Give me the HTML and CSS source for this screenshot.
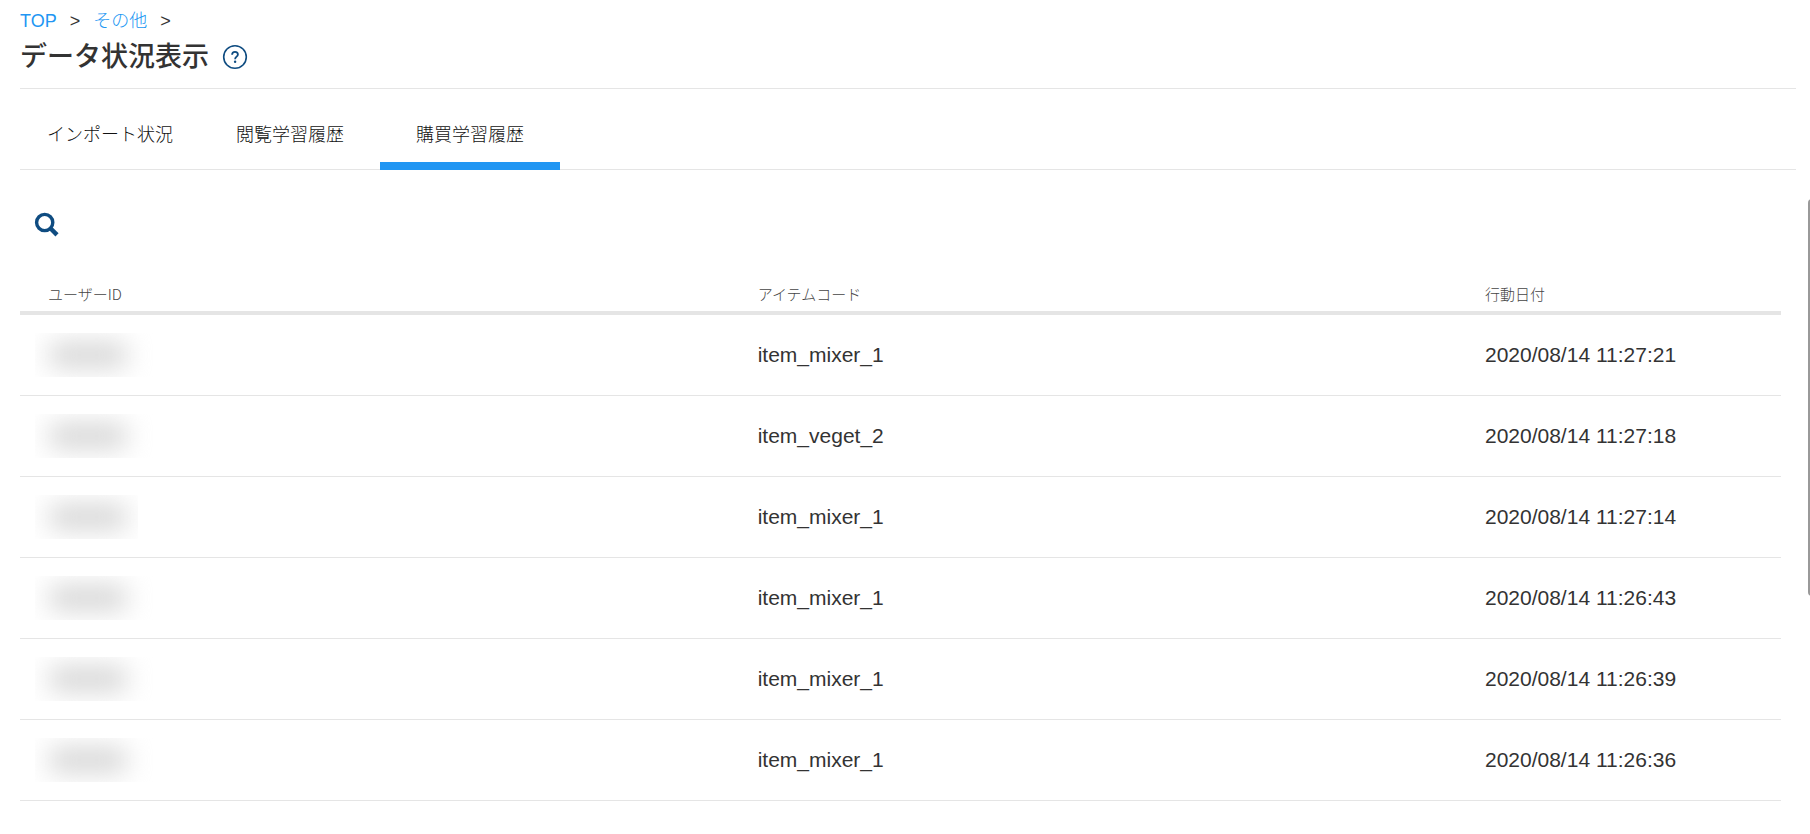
FILE: index.html
```html
<!DOCTYPE html>
<html lang="ja">
<head>
  <meta charset="UTF-8">
  <meta name="viewport" content="width=device-width, initial-scale=1.0">
  <title>データ状況表示</title>
  <link rel="stylesheet" href="styles.css">
</head>
<body>
  <header class="page-header">
    <nav class="breadcrumb">
      <a href="#">TOP</a>
      <span>&gt;</span>
      <a href="#">その他</a>
      <span>&gt;</span>
    </nav>
    <div class="title-row">
      <h1>データ状況表示</h1>
      <button type="button" class="icon-button" aria-label="ヘルプ">
        <svg width="26" height="26" viewBox="0 0 26 26" fill="none" stroke="#0f4c81">
          <circle cx="13" cy="13" r="11.3" stroke-width="1.6"/>
          <path d="M10.1 10.8C10.1 8.9 11.3 7.9 13 7.9s2.9 1 2.9 2.6c0 2.1-2.8 2.3-2.8 4.7" stroke-width="1.8"/>
          <circle cx="13.1" cy="17.7" r="1.2" fill="#0f4c81" stroke="none"/>
        </svg>
      </button>
    </div>
  </header>

  <div class="tabs" role="tablist">
    <button type="button" class="tab" role="tab">インポート状況</button>
    <button type="button" class="tab" role="tab">閲覧学習履歴</button>
    <button type="button" class="tab active" role="tab" aria-selected="true">購買学習履歴</button>
  </div>

  <main class="content">
    <button type="button" class="icon-button search" aria-label="検索">
      <svg width="26" height="26" viewBox="0 0 26 26" fill="none" stroke="#0f4c81">
        <circle cx="10.7" cy="10.5" r="8.1" stroke-width="3.4"/>
        <path d="M16.4 16.2l6.6 6.7" stroke-width="4.4"/>
      </svg>
    </button>

    <table class="history">
      <thead>
        <tr>
          <th class="col-user">ユーザーID</th>
          <th class="col-item">アイテムコード</th>
          <th class="col-date">行動日付</th>
        </tr>
      </thead>
      <tbody>
        <tr>
          <td><span class="masked"></span></td>
          <td>item_mixer_1</td>
          <td>2020/08/14 11:27:21</td>
        </tr>
        <tr>
          <td><span class="masked"></span></td>
          <td>item_veget_2</td>
          <td>2020/08/14 11:27:18</td>
        </tr>
        <tr>
          <td><span class="masked narrow"></span></td>
          <td>item_mixer_1</td>
          <td>2020/08/14 11:27:14</td>
        </tr>
        <tr>
          <td><span class="masked"></span></td>
          <td>item_mixer_1</td>
          <td>2020/08/14 11:26:43</td>
        </tr>
        <tr>
          <td><span class="masked"></span></td>
          <td>item_mixer_1</td>
          <td>2020/08/14 11:26:39</td>
        </tr>
        <tr>
          <td><span class="masked"></span></td>
          <td>item_mixer_1</td>
          <td>2020/08/14 11:26:36</td>
        </tr>
      </tbody>
    </table>
  </main>

  <div class="scroll-thumb"></div>
</body>
</html>
```
FILE: styles.css
```css
* {
  box-sizing: border-box;
}

body {
  margin: 0;
  padding: 8px 14px 0 20px;
  background: #fff;
  color: #333;
  font-family: "Liberation Sans", Arial, "Noto Sans CJK JP", sans-serif;
  font-size: 18px;
  font-weight: 300;
}

button {
  padding: 0;
  border: none;
  background: none;
  color: inherit;
  font: inherit;
  cursor: pointer;
}

svg {
  display: block;
}

/* header */
.page-header {
  padding-bottom: 8px;
  border-bottom: 1px solid #e5e5e5;
}

.breadcrumb {
  display: flex;
  gap: 13px;
  line-height: 26px;
}

.breadcrumb a {
  color: #2196f3;
  text-decoration: none;
}

.title-row {
  display: flex;
  align-items: center;
  gap: 13px;
  height: 46px;
}

h1 {
  margin: 0;
  font-size: 27px;
  font-weight: 500;
  line-height: 40px;
}

/* tabs */
.tabs {
  display: flex;
  border-bottom: 1px solid #e5e5e5;
}

.tab {
  width: 180px;
  height: 81px;
  margin-bottom: -1px;
  padding-top: 14px;
  border-bottom: 8px solid transparent;
  color: #111;
}

.tab.active {
  border-bottom-color: #2196f3;
}

/* history table */
.content {
  padding: 42px 15px 0 0;
}

.search {
  display: block;
  margin: 0 0 37px 14px;
}

.history {
  width: 100%;
  border-collapse: separate;
  border-spacing: 0;
  table-layout: fixed;
}

.history th {
  height: 40px;
  padding: 2px 28px 0;
  border-bottom: 4px solid #e5e5e5;
  color: #444;
  font-family: "Noto Sans CJK JP", sans-serif;
  font-size: 15px;
  font-weight: 300;
  line-height: 22px;
  text-align: left;
}

.history td {
  height: 81px;
  padding: 0 28px;
  border-bottom: 1px solid #e5e5e5;
  font-size: 21px;
  line-height: 24px;
}

.col-user {
  width: 40.3%;
}

.col-item {
  width: 41.3%;
}

/* hidden user ids */
.masked {
  display: block;
  width: 120px;
  height: 44px;
  margin-left: -13px;
  overflow: hidden;
}

.masked.narrow {
  width: 103px;
}

.masked::before {
  content: "";
  display: block;
  width: 76px;
  height: 24px;
  margin: 10px 0 0 15px;
  background: #d4d4d4;
  filter: blur(13px);
}

.scroll-thumb {
  position: fixed;
  top: 199px;
  right: -6px;
  width: 8px;
  height: 397px;
  border-radius: 4px;
  background: #999;
}
```
